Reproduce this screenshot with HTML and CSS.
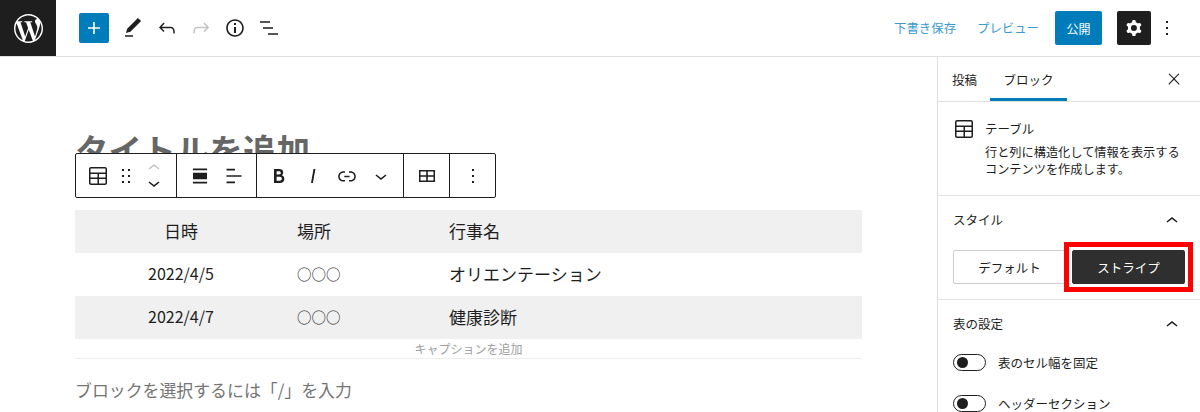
FILE: index.html
```html
<!DOCTYPE html>
<html lang="ja">
<head>
    <meta charset="UTF-8">
    <title>投稿を編集</title>
    <link rel="stylesheet" href="styles.css">
</head>
<body>
    <header class="topbar">
        <div class="logo">
            <svg width="29" height="29" viewBox="0 0 24 24"><path fill="#fff" d="M21.469 6.825c.84 1.537 1.318 3.3 1.318 5.175 0 3.979-2.156 7.456-5.363 9.325l3.295-9.527c.615-1.54.82-2.771.82-3.864 0-.405-.026-.78-.07-1.11m-7.981.105c.647-.03 1.232-.105 1.232-.105.582-.075.514-.93-.067-.899 0 0-1.755.135-2.88.135-1.064 0-2.85-.15-2.85-.15-.585-.03-.661.855-.075.885 0 0 .54.061 1.125.09l1.68 4.605-2.37 7.08L5.354 6.9c.649-.03 1.234-.1 1.234-.1.585-.075.516-.93-.065-.896 0 0-1.746.138-2.874.138-.2 0-.438-.008-.69-.015C4.911 3.15 8.235 1.215 12 1.215c2.809 0 5.365 1.072 7.286 2.833-.046-.003-.091-.009-.141-.009-1.06 0-1.812.923-1.812 1.914 0 .89.513 1.643 1.06 2.531.411.72.89 1.643.89 2.977 0 .915-.354 1.994-.821 3.479l-1.075 3.585-3.9-11.61.001.014zM12 22.784c-1.059 0-2.081-.153-3.048-.437l3.237-9.406 3.315 9.087c.024.053.05.101.078.149-1.12.393-2.325.609-3.582.609M1.211 12c0-1.564.336-3.05.935-4.39L7.29 21.709C3.694 19.96 1.212 16.271 1.211 12M12 0C5.385 0 0 5.385 0 12s5.385 12 12 12 12-5.385 12-12S18.615 0 12 0"/></svg>
        </div>
        <div class="tools">
            <button class="add"><svg width="24" height="24" viewBox="0 0 24 24"><path fill="#fff" d="M18 11.2h-5.2V6h-1.6v5.2H6v1.6h5.2V18h1.6v-5.2H18z"/></svg></button>
            <svg class="tool" width="24" height="24" viewBox="0 0 24 24"><path d="M20.1 5.1L16.9 2 6.2 12.7l-1.3 4.4 4.5-1.3L20.1 5.1zM4 20.8h8v-1.5H4v1.5z"/></svg>
            <svg class="tool" width="24" height="24" viewBox="0 0 24 24"><path d="M18.3 11.7c-.6-.6-1.4-.9-2.3-.9H6.7l2.9-3.3-1.1-1-4.5 5L8.5 16l1-1-2.7-2.7H16c.5 0 .9.2 1.3.5 1 1 1 3.4 1 4.5v.3h1.5v-.2c0-1.5 0-4.3-1.5-5.7z"/></svg>
            <svg class="tool off" width="24" height="24" viewBox="0 0 24 24"><path d="M15.6 6.5l-1.1 1 2.9 3.3H8c-.9 0-1.7.3-2.3.9-1.4 1.5-1.4 4.2-1.4 5.6v.2h1.5v-.3c0-1.1 0-3.5 1-4.5.3-.3.7-.5 1.3-.5h9.2L14.5 15l1.1 1.1 4.6-4.6-4.6-5z"/></svg>
            <svg class="tool" width="24" height="24" viewBox="0 0 24 24"><path d="M12 3.2c-4.8 0-8.8 3.9-8.8 8.8 0 4.8 3.9 8.8 8.8 8.8 4.8 0 8.8-3.9 8.8-8.8 0-4.8-4-8.8-8.8-8.8zm0 16c-4 0-7.2-3.3-7.2-7.2C4.8 8 8 4.8 12 4.8s7.2 3.3 7.2 7.2c0 4-3.2 7.2-7.2 7.2zM11 17h2v-6h-2v6zm0-8h2V7h-2v2z"/></svg>
            <svg class="tool" width="24" height="24" viewBox="0 0 24 24"><path d="M3 5.2h10v1.5H3zM6 11.2h10v1.5H6zM11 17.2h10v1.5H11z"/></svg>
        </div>
        <div class="actions">
            <a class="link save">下書き保存</a>
            <a class="link preview">プレビュー</a>
            <button class="publish">公開</button>
            <button class="settings"><svg width="24" height="24" viewBox="0 0 24 24"><path fill="#fff" fill-rule="evenodd" d="M10.289 4.836A1 1 0 0111.275 4h1.306a1 1 0 01.987.836l.244 1.466c.787.26 1.503.679 2.108 1.218l1.393-.522a1 1 0 011.216.437l.653 1.13a1 1 0 01-.23 1.273l-1.148.944a6.025 6.025 0 010 2.435l1.149.946a1 1 0 01.23 1.272l-.653 1.13a1 1 0 01-1.216.437l-1.394-.522c-.605.54-1.32.958-2.108 1.218l-.244 1.466a1 1 0 01-.987.836h-1.306a1 1 0 01-.986-.836l-.244-1.466a5.995 5.995 0 01-2.108-1.218l-1.394.522a1 1 0 01-1.217-.436l-.653-1.131a1 1 0 01.23-1.272l1.149-.946a6.026 6.026 0 010-2.435l-1.148-.944a1 1 0 01-.23-1.272l.653-1.131a1 1 0 011.217-.437l1.393.522a5.994 5.994 0 012.108-1.218l.244-1.466zM14.929 12a3 3 0 11-6 0 3 3 0 016 0z"/></svg></button>
            <svg class="more" width="24" height="24" viewBox="0 0 24 24"><path d="M13 19h-2v-2h2v2zm0-6h-2v-2h2v2zm0-6h-2V5h2v2z"/></svg>
        </div>
    </header>

    <div class="layout">
        <main class="editor">
            <h1 class="title">タイトルを追加</h1>

            <div class="block-toolbar">
                <div class="group group-block">
                    <svg width="24" height="24" viewBox="0 0 24 24"><path d="M19 3H5c-1.1 0-2 .9-2 2v14c0 1.1.9 2 2 2h14c1.1 0 2-.9 2-2V5c0-1.1-.9-2-2-2zM5 4.5h14c.3 0 .5.2.5.5v3.5h-15V5c0-.3.2-.5.5-.5zm8 5.5h6.5v3.5H13V10zm-1.5 3.5h-7V10h7v3.5zm-7 5.5v-4h7v4.5H5c-.3 0-.5-.2-.5-.5zm14.5.5h-6V15h6.5v4c0 .3-.2.5-.5.5z"/></svg>
                    <svg width="24" height="24" viewBox="0 0 24 24"><path d="M8 7h2V5H8v2zm0 6h2v-2H8v2zm0 6h2v-2H8v2zm6-14v2h2V5h-2zm0 8h2v-2h-2v2zm0 6h2v-2h-2v2z"/></svg>
                    <div class="mover">
                        <svg class="off" width="24" height="24" viewBox="0 0 24 24"><path d="M6.5 12.4L12 8l5.5 4.4-.9 1.2L12 10l-4.5 3.6-1-1.2z"/></svg>
                        <svg width="24" height="24" viewBox="0 0 24 24"><path d="M17.5 11.6L12 16l-5.5-4.4.9-1.2L12 14l4.5-3.6 1 1.2z"/></svg>
                    </div>
                </div>
                <div class="group group-align">
                    <svg width="24" height="24" viewBox="0 0 24 24"><path d="M5 4.5h14v1.8H5zM5 8.8h14v6.4H5zM5 17.7h14v1.8H5z"/></svg>
                    <svg width="24" height="24" viewBox="0 0 24 24"><path d="M4.5 4.8h8.5v1.6H4.5zM4.5 11.2h15v1.6h-15zM4.5 17.6h8.5v1.6H4.5z"/></svg>
                </div>
                <div class="group group-format">
                    <svg width="24" height="24" viewBox="0 0 24 24"><path d="M14.7 11.3c1-.6 1.5-1.6 1.5-3 0-2.3-1.3-3.4-4-3.4H7v14h5.8c1.4 0 2.5-.3 3.3-1 .8-.7 1.2-1.7 1.2-2.9.1-1.9-.8-3.1-2.6-3.7zm-5.1-4h2.3c.6 0 1.1.1 1.4.4.3.3.5.7.5 1.2s-.2 1-.5 1.2c-.3.3-.8.4-1.4.4H9.6V7.3zm4.6 9c-.4.3-1 .4-1.7.4H9.6v-3.9h2.9c.7 0 1.3.2 1.7.5.4.3.6.8.6 1.5s-.2 1.2-.6 1.5z"/></svg>
                    <svg width="24" height="24" viewBox="0 0 24 24"><path d="M12.5 5L10 19h1.9l2.5-14z"/></svg>
                    <svg width="24" height="24" viewBox="0 0 24 24"><path d="M15.6 7.2H14v1.5h1.6c2 0 3.7 1.7 3.7 3.7s-1.7 3.7-3.7 3.7H14v1.5h1.6c2.8 0 5.2-2.3 5.2-5.2 0-2.9-2.3-5.2-5.2-5.2zM4.7 12.4c0-2 1.7-3.7 3.7-3.7H10V7.2H8.4c-2.9 0-5.2 2.3-5.2 5.2 0 2.9 2.3 5.2 5.2 5.2H10v-1.5H8.4c-2 0-3.7-1.7-3.7-3.7zm4.6.9h5.3v-1.5H9.3v1.5z"/></svg>
                    <svg width="24" height="24" viewBox="0 0 24 24"><path d="M17.5 11.6L12 16l-5.5-4.4.9-1.2L12 14l4.5-3.6 1 1.2z"/></svg>
                </div>
                <div class="group group-table">
                    <svg width="24" height="24" viewBox="0 0 24 24"><path fill-rule="evenodd" d="M4 6h16v12H4zM5.5 7.5v3.7h5.7V7.5zm7.3 0v3.7h5.7V7.5zm-7.3 5.2v3.8h5.7v-3.8zm7.3 0v3.8h5.7v-3.8z"/></svg>
                </div>
                <div class="group group-more">
                    <svg width="24" height="24" viewBox="0 0 24 24"><path d="M13 19h-2v-2h2v2zm0-6h-2v-2h2v2zm0-6h-2V5h2v2z"/></svg>
                </div>
            </div>

            <figure class="table-block">
                <table>
                    <tr><td>日時</td><td>場所</td><td>行事名</td></tr>
                    <tr><td class="date">2022/4/5</td><td class="marks">○○○</td><td>オリエンテーション</td></tr>
                    <tr><td class="date">2022/4/7</td><td class="marks">○○○</td><td>健康診断</td></tr>
                </table>
                <figcaption>キャプションを追加</figcaption>
            </figure>
            <p class="placeholder">ブロックを選択するには「/」を入力</p>
        </main>

        <aside class="sidebar">
            <div class="tabs">
                <span class="tab">投稿</span>
                <span class="tab active">ブロック</span>
                <svg class="close" width="18" height="18" viewBox="0 0 24 24"><path d="M13 11.8l6.1-6.3-1-1-6.1 6.2-6.1-6.2-1 1 6.1 6.3-6.5 6.7 1 1 6.5-6.6 6.5 6.6 1-1z"/></svg>
            </div>
            <section class="card">
                <svg width="24" height="24" viewBox="0 0 24 24"><path d="M19 3H5c-1.1 0-2 .9-2 2v14c0 1.1.9 2 2 2h14c1.1 0 2-.9 2-2V5c0-1.1-.9-2-2-2zM5 4.5h14c.3 0 .5.2.5.5v3.5h-15V5c0-.3.2-.5.5-.5zm8 5.5h6.5v3.5H13V10zm-1.5 3.5h-7V10h7v3.5zm-7 5.5v-4h7v4.5H5c-.3 0-.5-.2-.5-.5zm14.5.5h-6V15h6.5v4c0 .3-.2.5-.5.5z"/></svg>
                <div class="card-text">
                    <h2>テーブル</h2>
                    <p>行と列に構造化して情報を表示するコンテンツを作成します。</p>
                </div>
            </section>
            <section class="panel panel-style">
                <div class="panel-head">
                    <h3>スタイル</h3>
                    <svg width="24" height="24" viewBox="0 0 24 24"><path d="M6.5 12.4L12 8l5.5 4.4-.9 1.2L12 10l-4.6 3.6z"/></svg>
                </div>
                <div class="styles">
                    <button class="style-btn">デフォルト</button>
                    <button class="style-btn selected">ストライプ</button>
                    <div class="callout"></div>
                </div>
            </section>
            <section class="panel">
                <div class="panel-head">
                    <h3>表の設定</h3>
                    <svg width="24" height="24" viewBox="0 0 24 24"><path d="M6.5 12.4L12 8l5.5 4.4-.9 1.2L12 10l-4.6 3.6z"/></svg>
                </div>
                <div class="toggles">
                    <div class="toggle-row"><span class="toggle"></span><label>表のセル幅を固定</label></div>
                    <div class="toggle-row"><span class="toggle"></span><label>ヘッダーセクション</label></div>
                </div>
            </section>
        </aside>
    </div>
</body>
</html>
```

FILE: styles.css
```css
* {
    box-sizing: border-box;
}
html, body {
    height: 412px;
    margin: 0;
    overflow: hidden;
}
body {
    font-family: "Noto Sans CJK JP", "Noto Sans", sans-serif;
    color: #1e1e1e;
    background: #fff;
}
button {
    font-family: inherit;
    border: none;
    padding: 0;
}
svg {
    display: block;
    fill: #1e1e1e;
    flex: none;
}

/* top bar */
.topbar {
    display: flex;
    align-items: center;
    height: 57px;
    border-bottom: 1px solid #e0e0e0;
}
.logo {
    width: 56px;
    height: 56px;
    background: #1e1e1e;
    display: flex;
    align-items: center;
    justify-content: center;
}
.tools {
    display: flex;
    align-items: center;
    margin-left: 23px;
}
.add {
    width: 30px;
    height: 30px;
    background: #007cba;
    border-radius: 2px;
    display: flex;
    align-items: center;
    justify-content: center;
    margin-right: 12px;
}
.tool {
    margin-right: 10px;
}
.tool.off {
    fill: #c4c4c4;
}
.actions {
    margin-left: auto;
    display: flex;
    align-items: center;
}
.link {
    color: #3a9bd0;
    font-size: 12.4px;
}
.save {
    margin-right: 21px;
}
.preview {
    margin-right: 16px;
}
.publish {
    width: 47px;
    height: 34px;
    background: #007cba;
    color: #fff;
    font-size: 12px;
    border-radius: 2px;
    margin-right: 15px;
}
.settings {
    width: 34px;
    height: 34px;
    background: #1e1e1e;
    border-radius: 2px;
    display: flex;
    align-items: center;
    justify-content: center;
    margin-right: 4px;
}
.more {
    margin-right: 21px;
}

.layout {
    display: flex;
    height: 355px;
}

/* editor */
.editor {
    position: relative;
    flex: 1;
    padding: 72px 75px 0;
}
.title {
    margin: 0;
    font-size: 33.6px;
    line-height: 42px;
    font-weight: 700;
    color: #666;
}
.block-toolbar {
    position: absolute;
    left: 75px;
    top: 96px;
    display: flex;
    height: 45px;
    background: #fff;
    border: 1px solid #1e1e1e;
    border-radius: 2px;
}
.group {
    display: flex;
    align-items: center;
    border-right: 1px solid #1e1e1e;
}
.group:last-child {
    border-right: none;
}
.group-block {
    width: 101px;
    padding-left: 10px;
}
.group-block > svg:nth-child(2) {
    margin-left: 4px;
}
.mover {
    margin-left: 4px;
    display: flex;
    flex-direction: column;
}
.mover svg + svg {
    margin-top: -9px;
}
.mover .off {
    fill: #c4c4c4;
}
.group-align {
    width: 80px;
    padding-left: 11px;
    gap: 10px;
}
.group-format {
    width: 147px;
    padding-left: 10px;
    gap: 10px;
}
.group-table {
    width: 46px;
    justify-content: center;
}
.group-more {
    width: 45px;
    justify-content: center;
}
.table-block {
    margin: 39px 0 0;
}
table {
    width: 787px;
    border-collapse: collapse;
    table-layout: fixed;
    font-size: 17px;
}
td {
    height: 43px;
    padding: 0 10px 3px;
}
td:nth-child(1) {
    width: 212px;
    text-align: center;
}
td:nth-child(2) {
    width: 152px;
}
td.date {
    font-size: 16px;
}
td.marks {
    font-size: 14.5px;
}
tr:nth-child(odd) {
    background: #f0f0f0;
}
figcaption {
    width: 787px;
    height: 20px;
    line-height: 20px;
    font-size: 12px;
    color: #a0a0a0;
    text-align: center;
    border-bottom: 1px solid #eee;
}
.placeholder {
    margin: 18px 0 0;
    font-size: 16.9px;
    line-height: 26px;
    color: #757575;
}

/* sidebar */
.sidebar {
    width: 263px;
    border-left: 1px solid #e0e0e0;
}
.tabs {
    position: relative;
    display: flex;
    height: 45px;
    align-items: center;
    border-bottom: 1px solid #e0e0e0;
    font-size: 12.5px;
}
.tab {
    display: flex;
    align-items: center;
    height: 44px;
    padding: 0 14px;
}
.tab.active {
    width: 77px;
    padding: 3px 0 0;
    margin-left: -1px;
    justify-content: center;
    border-bottom: 3px solid #007cba;
}
.close {
    margin-left: auto;
    margin-right: 17px;
}
.card {
    display: flex;
    padding: 15px 18px 0;
    height: 94px;
    border-bottom: 1px solid #e0e0e0;
    gap: 9px;
}
.card svg {
    margin-left: -4px;
}
.card h2 {
    margin: 0;
    font-size: 12.5px;
    font-weight: 400;
    line-height: 24px;
}
.card p {
    margin: 3px 0 0;
    font-size: 12.2px;
    line-height: 17px;
    width: 198px;
}
.panel {
    padding: 0 15px;
}
.panel-style {
    height: 104px;
    border-bottom: 1px solid #e0e0e0;
}
.panel-head {
    display: flex;
    justify-content: space-between;
    align-items: center;
    height: 47px;
}
.panel-head h3 {
    margin: 0;
    font-size: 12.5px;
    line-height: 17px;
    font-weight: 400;
}
.panel-head svg {
    margin: 2px 1px 0 0;
}
.styles {
    position: relative;
    display: flex;
    gap: 6px;
    margin-top: 7px;
}
.style-btn {
    width: 113px;
    height: 34px;
    background: #fff;
    color: #1e1e1e;
    font-size: 12.5px;
    border: 1px solid #ccc;
    border-radius: 2px;
}
.style-btn.selected {
    background: #2f2f2f;
    border-color: #2f2f2f;
    color: #fff;
}
.callout {
    position: absolute;
    left: 111px;
    top: -8px;
    width: 129px;
    height: 50px;
    border: 5px solid #f00;
}
.toggles {
    display: flex;
    flex-direction: column;
    gap: 24px;
    padding-top: 7px;
}
.toggle-row {
    display: flex;
    align-items: center;
    height: 17px;
    gap: 12px;
    font-size: 12.5px;
    line-height: 17px;
}
.toggle {
    position: relative;
    width: 33px;
    height: 17px;
    border: 1px solid #1e1e1e;
    border-radius: 9px;
}
.toggle::after {
    content: "";
    position: absolute;
    left: 3px;
    top: 2px;
    width: 11px;
    height: 11px;
    border-radius: 50%;
    background: #1e1e1e;
}
```
